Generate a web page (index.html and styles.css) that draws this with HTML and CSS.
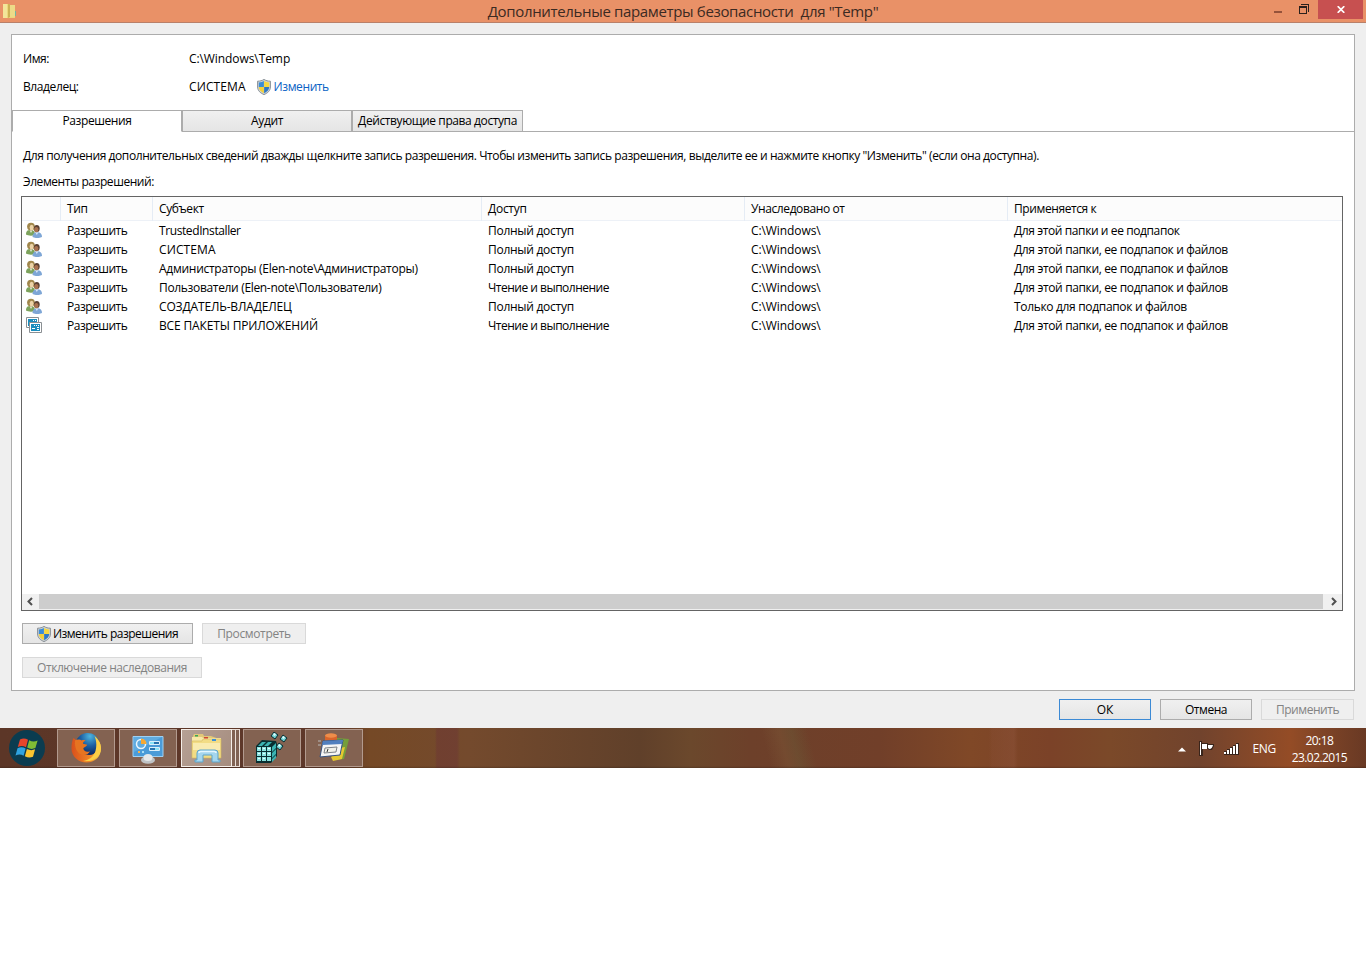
FILE: index.html
```html
<!DOCTYPE html>
<html lang="ru">
<head>
  <meta charset="UTF-8">
  <title>Дополнительные параметры безопасности для "Temp"</title>
  <link rel="stylesheet" href="styles.css">
</head>
<body>

  <svg class="defs" width="0" height="0">
    <symbol id="shield" viewBox="0 0 14 16">
      <path d="M7 .4C5.200 1.600 3 2.200.6 2.200V8c0 3.600 2.600 6 6.400 7.600C10.800 14 13.400 11.600 13.400 8V2.200C11 2.200 8.800 1.600 7 .4z" fill="#cfd5d9" stroke="#7d848b" stroke-width=".9"/>
      <path d="M6.900 2V7.900H1.800V3.400C4 3.300 5.600 2.800 6.900 2z" fill="#3a8cd6"/>
      <path d="M7.100 2V7.900H12.200V3.400C10 3.300 8.400 2.800 7.100 2z" fill="#f6d840"/>
      <path d="M1.800 8.100H6.900V14.300C4 13 1.900 11 1.800 8.100z" fill="#f3d03a"/>
      <path d="M12.200 8.100H7.100V14.300C10 13 12.100 11 12.200 8.100z" fill="#2f78c4"/>
    </symbol>
    <symbol id="users" viewBox="0 -.6 16 16">
      <path d="M0 12c0-3.200 1.200-4.500 4.500-4.500S9 9 9 12.500c-3 1-7 .8-9-.5z" fill="#7da35c"/>
      <path d="M3.500 7.500l1.500 3 1.500-3z" fill="#e9efdf"/>
      <circle cx="5" cy="4" r="3.900" fill="#a1874c"/>
      <ellipse cx="5.600" cy="4.800" rx="2" ry="2.700" fill="#ecd3a8"/>
      <path d="M6.500 14.500c0-3.300 1.500-4.800 4.800-4.800s4.700 1.500 4.700 4.800c-2.500 1.300-7 1.300-9.500 0z" fill="#7ea6d6"/>
      <path d="M9.500 9.800l1.300 2.500 1.400-2.500z" fill="#dbe8f6"/>
      <ellipse cx="10.800" cy="5.800" rx="2.900" ry="3.500" fill="#5a4032"/>
      <ellipse cx="10.300" cy="7" rx="2.100" ry="2.700" fill="#a8714f"/>
    </symbol>
    <symbol id="packages" viewBox="0 0 16 16">
      <path d="M.5.5h12v10H.5z" fill="#fff" stroke="#8a8f93"/>
      <path d="M2 2h9v7H2z" fill="#1a8dbd"/>
      <path d="M7 3h1v1H7zM9 3h1v1H9z" fill="#fff"/>
      <path d="M3.500 5.500h12v10h-12z" fill="#fff" stroke="#8a8f93"/>
      <path d="M5 7h9v7H5z" fill="#1a8dbd"/>
      <path d="M6 11h3v1H6zM8 8h1v1H8zM10 8h1v1h-1zM12 8h1v1h-1zM11 10h2v1h-2zM11 12h2v1h-2z" fill="#fff"/>
    </symbol>
  </svg>

  <div class="titlebar">
    <svg class="folder" width="14" height="16" viewBox="0 0 14 16">
      <path d="M0 1h6l1 1h5v13H0z" fill="#ecd77c"/>
      <path d="M0 1h4v14H0z" fill="#f3e59a"/>
      <path d="M5 1h2v13l-2 1z" fill="#cdb256"/>
      <path d="M7 2h5v12H7z" fill="#eddb88"/>
      <path d="M12 8h1v5h-1z" fill="#71b7a0"/>
    </svg>
    <div class="title">Дополнительные параметры безопасности&nbsp; для "Temp"</div>
    <div class="controls">
      <svg class="min" width="8" height="2"><path d="M0 0h8v2H0z" fill="#95523a"/></svg>
      <svg class="max" width="10" height="10" viewBox="0 0 10 10">
        <path d="M0 2h8v8H0zM1 4v5h6V4z" fill="#2b211d" fill-rule="evenodd"/>
        <path d="M2 0h8v8H9V1H2z" fill="#2b211d"/>
      </svg>
      <div class="close">
        <svg width="8" height="7" viewBox="0 0 8 7"><path d="M.7.200L7.300 6.800M7.300.200L.7 6.800" stroke="#fff" stroke-width="1.700"/></svg>
      </div>
    </div>
  </div>

  <div class="dialog">
    <div class="panel">
      <div class="info">
        <span>Имя:</span><span class="path">C:\Windows\Temp</span>
        <span>Владелец:</span>
        <span class="owner"><span class="system">СИСТЕМА</span><svg width="14" height="16"><use href="#shield"/></svg><a>Изменить</a></span>
      </div>

      <div class="tabs">
        <div class="tab active">Разрешения</div>
        <div class="tab">Аудит</div>
        <div class="tab wide">Действующие права доступа</div>
      </div>

      <p class="hint">Для получения дополнительных сведений дважды щелкните запись разрешения. Чтобы изменить запись разрешения, выделите ее и нажмите кнопку "Изменить" (если она доступна).</p>
      <p class="label">Элементы разрешений:</p>

      <div class="list">
        <div class="row head"><span></span><span>Тип</span><span>Субъект</span><span class="full">Доступ</span><span>Унаследовано от</span><span>Применяется к</span></div>
        <div class="rows">
          <div class="row"><svg><use href="#users"/></svg><span class="type">Разрешить</span><span>TrustedInstaller</span><span class="full">Полный доступ</span><span class="path">C:\Windows\</span><span>Для этой папки и ее подпапок</span></div>
          <div class="row"><svg><use href="#users"/></svg><span class="type">Разрешить</span><span class="system">СИСТЕМА</span><span class="full">Полный доступ</span><span class="path">C:\Windows\</span><span class="scope">Для этой папки, ее подпапок и файлов</span></div>
          <div class="row"><svg><use href="#users"/></svg><span class="type">Разрешить</span><span class="full">Администраторы (Elen-note\Администраторы)</span><span class="full">Полный доступ</span><span class="path">C:\Windows\</span><span class="scope">Для этой папки, ее подпапок и файлов</span></div>
          <div class="row"><svg><use href="#users"/></svg><span class="type">Разрешить</span><span class="group">Пользователи (Elen-note\Пользователи)</span><span class="type">Чтение и выполнение</span><span class="path">C:\Windows\</span><span class="scope">Для этой папки, ее подпапок и файлов</span></div>
          <div class="row"><svg><use href="#users"/></svg><span class="type">Разрешить</span><span class="caps">СОЗДАТЕЛЬ-ВЛАДЕЛЕЦ</span><span class="full">Полный доступ</span><span class="path">C:\Windows\</span><span class="group">Только для подпапок и файлов</span></div>
          <div class="row"><svg><use href="#packages"/></svg><span class="type">Разрешить</span><span class="caps">ВСЕ ПАКЕТЫ ПРИЛОЖЕНИЙ</span><span class="type">Чтение и выполнение</span><span class="path">C:\Windows\</span><span class="scope">Для этой папки, ее подпапок и файлов</span></div>
        </div>
        <div class="scroll">
          <svg width="17" height="15"><path d="M10 4L6.500 7.500l3.500 3.500" fill="none" stroke="#505050" stroke-width="2"/></svg>
          <div class="thumb"></div>
          <svg width="19" height="15"><path d="M9 4l3.500 3.500L9 11" fill="none" stroke="#505050" stroke-width="2"/></svg>
        </div>
      </div>

      <div class="actions">
        <button class="edit"><svg width="14" height="16"><use href="#shield"/></svg>Изменить разрешения</button>
        <button class="view" disabled>Просмотреть</button>
      </div>
      <button class="inherit" disabled>Отключение наследования</button>
    </div>

    <div class="footer">
      <button class="ok">ОК</button>
      <button>Отмена</button>
      <button class="apply" disabled>Применить</button>
    </div>
  </div>

  <div class="taskbar">
    <div class="start">
      <svg width="36" height="36" viewBox="0 0 36 36">
        <circle cx="18" cy="18" r="18" fill="#0b3c50"/>
        <path d="M11 9.500c3-1.500 5.500-1.200 8 .3l-2 7.400c-2.700-1.400-5-1.500-8.200-.2z" fill="#e8452c"/>
        <path d="M20.200 10.300c2.800 1.500 5.500 1.500 8.400.3l-2.200 7.500c-3 1.200-5.400 1-8.200-.5z" fill="#80bd35"/>
        <path d="M8.500 18.200c3-1.400 5.500-1.200 8.100.2l-2 7.300c-2.600-1.400-5-1.500-8.100-.3z" fill="#30a3e0"/>
        <path d="M17.900 19c2.800 1.400 5.300 1.500 8.200.3L24 26.700c-2.900 1.100-5.300.9-8.100-.5z" fill="#fbc530"/>
      </svg>
    </div>
    <div class="task">
      <svg width="32" height="32" viewBox="0 0 32 32">
        <defs>
          <linearGradient id="fox" x1="0" y1="0" x2="1" y2="0">
            <stop offset="0" stop-color="#d9501c"/><stop offset=".6" stop-color="#ee8225"/><stop offset="1" stop-color="#fbd04a"/>
          </linearGradient>
          <radialGradient id="globe" cx=".6" cy=".15" r=".8">
            <stop offset="0" stop-color="#4db4df"/><stop offset=".55" stop-color="#1c5fa3"/><stop offset="1" stop-color="#0d2d66"/>
          </radialGradient>
        </defs>
        <path d="M3.500 6l3 2.500L12 4h11c5 2.500 8 7 8 12.500C31 25 24.500 30.500 16.500 30.500S1.500 24.500 1.500 16.500C1.500 12.500 2 9 3.500 6z" fill="url(#fox)"/>
        <path d="M7 7C10 2.500 14 1 18 1c5 0 9 3 10.500 7 .5 7-2 15-9 15-6 0-10-3-10.500-8z" fill="url(#globe)"/>
        <path d="M5 8.500c3-1.500 5.500-.8 6.500 0 1.500-.6 2.800-.5 4 0-1.800.9-2.600 2-2.500 3.200l4.300 1c-.5 1.700-3.300 2.200-4 3.500.5 2.800 3 4.500 6.700 3-1.500 3-5 4.500-8.500 3.200C7 21 4.500 16 5 8.500z" fill="#e67421"/>
        <path d="M24.500 4c7 5 8.500 15 3 21-3.500 3.500-9 5-14.500 4 6.500-1 11-4.500 12.500-10 1.200-5 1.200-10-1-15z" fill="#fbcf45"/>
      </svg>
    </div>
    <div class="task">
      <svg width="32" height="32" viewBox="0 0 32 32">
        <path d="M1 4.500h30v20H1z" fill="#4a9bd8" stroke="#9fd1f2"/>
        <path d="M2 5h28L2 20z" fill="#5fabdf"/>
        <circle cx="9" cy="12" r="4.500" fill="none" stroke="#e8f5fc" stroke-width="1.500"/>
        <path d="M9 12V6.500a5.500 5.500 0 0 1 5.500 5.500z" fill="#f6a833"/>
        <path d="M17.500 9.500h10v3h-10zM17.500 15.500h10v3h-10z" fill="#2871ad" stroke="#dbeffa"/>
        <path d="M18 10h4v2h-4zM23 16h4v2h-4z" fill="#8be2f6"/>
        <path d="M6 19h2v2H6z" fill="#f6b04b"/><path d="M10 19h2v2h-2z" fill="#a8ddf5"/>
        <ellipse cx="16" cy="28" rx="7" ry="3.800" fill="#bfc3c6"/>
        <ellipse cx="16" cy="25.500" rx="4.500" ry="3.500" fill="#e6e8e9"/>
      </svg>
    </div>
    <div class="task current">
      <svg width="34" height="32" viewBox="0 0 34 32">
        <path d="M3 4l1-2h9l1 2h7l8 3v19H3z" fill="#e2c878"/>
        <path d="M2 5h10l1 1h18v20H2z" fill="#f8e9a8"/>
        <path d="M2 9h10l1-2h18v19H2z" fill="#f2dc85" stroke="#d4b85d" stroke-width=".6"/>
        <path d="M5 3h3v1.500H5z" fill="#3aa657"/><path d="M14 5h4v1.500h-4z" fill="#cf4932"/><path d="M22 7h4v2h-4z" fill="#3e91d6"/>
        <path d="M3 11h27v7H3z" fill="#f9ebb0"/>
        <path d="M7 28V21q0-3 3-3h15q3 0 3 3v7h2v2h-8v-7H13v7H5v-2z" fill="#a5d6ee" stroke="#5da5cb"/>
        <path d="M9 21q0-1.500 2-1.500h13q2 0 2 1.500" fill="none" stroke="#e5f7ff" stroke-width="1.500"/>
      </svg>
    </div>
    <div class="stack"></div><div class="stack"></div>
    <div class="task after">
      <svg width="32" height="32" viewBox="0 0 32 32">
        <path d="M0 14l6-6 14 1 1 3v12l-6 7H0z" fill="#092e31"/>
        <path d="M1 15h4v4H1zM6 15h4v4H6zM11 15h4v4h-4zM1 20h4v4H1zM6 20h4v4H6zM11 20h4v4h-4zM1 25h4v4H1zM6 25h4v4H6zM11 25h4v4h-4z" fill="#8be3df"/>
        <path d="M2 14l4-4h4l-4 4zM8 14l4-4h4l-4 4zM16 15l4-4v5l-4 4zM16 21l4-4v5l-4 4zM16 27l4-4v3l-4 4z" fill="#3bb3b2"/>
        <path d="M2 16h2v1H2zM7 16h2v1H7zM12 16h2v1h-2zM2 21h2v1H2zM7 21h2v1H7zM12 21h2v1h-2zM2 26h2v1H2zM7 26h2v1H7z" fill="#e3ffff"/>
        <path d="M18 0l4 3-3 4-4-3zM27 3l4 3-3 4-4-3zM23 11l4 3-3 4-4-3z" fill="#6fd0d1" stroke="#082c30"/>
        <path d="M17 2l2-1 1 2-2 1zM26 5l2-1 1 2-2 1zM22 13l2-1 1 2-2 1z" fill="#dcffff"/>
      </svg>
    </div>
    <div class="task">
      <svg width="34" height="32" viewBox="0 0 34 32">
        <path d="M20 6l12 1-5 20-9 1z" fill="#759e3b"/>
        <path d="M23 16l5-1-3 12-9 2-2-4z" fill="#e5c831"/>
        <path d="M8 3.500h12V11H8z" fill="#d9652b"/>
        <ellipse cx="14" cy="3.500" rx="6" ry="2.200" fill="#ee8d4a"/>
        <path d="M6 9l20-1-3 15-20 2z" fill="#f5f5f5" stroke="#34517f"/>
        <path d="M6 9l20-1-1 4-20 1z" fill="#517fbe"/>
        <path d="M8 16l12-1-1 5-12 1z" fill="#f1f1ea" stroke="#7d8288"/>
        <path d="M11 17l-1 3" stroke="#333"/>
        <path d="M1 9h3M1 13h3" stroke="#bbb"/>
      </svg>
    </div>
    <div class="tray">
      <svg class="up" width="8" height="5"><path d="M0 4.500L4 .5l4 4z" fill="#fff"/></svg>
      <svg class="flag" width="16" height="16" viewBox="0 0 16 16">
        <path d="M0 0h3v2h6v1h6v2l-2 4h-3l-1-1H4v7H0z" fill="#3a251b"/>
        <path d="M1 1h1v13H1zM3 3h5v5H3zM9 4h5q-1 4-3.500 4L9 7z" fill="#fff"/>
      </svg>
      <svg class="net" width="15" height="12" viewBox="0 0 15 12">
        <path d="M0 8h3V6h3V4h3V2h3V0h3v12H0z" fill="#38241b"/>
        <path d="M0 9h2v2H0zM3 7h2v4H3zM6 5h2v6H6zM9 3h2v8H9zM12 1h2v10h-2z" fill="#fff"/>
      </svg>
      <span class="lang">ENG</span>
      <div class="clock"><span>20:18</span><span>23.02.2015</span></div>
    </div>
  </div>

</body>
</html>
```
FILE: styles.css
```css
* { margin: 0; padding: 0; box-sizing: border-box; }
body {
  font: 12px/16px "Open Sans", "Noto Sans", sans-serif;
  letter-spacing: -.4px;
  background: #fff;
  color: #000;
  white-space: nowrap;
}
svg { display: block; flex: none; }
.defs { display: none; }

.titlebar {
  display: grid;
  grid-template-columns: 120px 1fr 120px;
  height: 23px;
  background: #e99167;
  border-bottom: 1px solid #b98069;
}
.folder { margin: 3px 0 0 3px; }
.title {
  font-size: 15px;
  line-height: 23px;
  letter-spacing: -.34px;
  text-align: center;
  color: #3b2a22;
}
.controls { display: flex; }
.min { margin: 11px 17px 0 28px; }
.max { margin: 4px 9px 0 0; }
.close {
  width: 45px;
  height: 19px;
  margin-left: auto;
  margin-right: 3px;
  background: #c75050;
  display: flex;
  align-items: center;
  justify-content: center;
}

.dialog {
  height: 705px;
  padding: 11px 11px 0;
  background: #efefef;
}
.panel {
  height: 657px;
  border: 1px solid #acacac;
  background: #fff;
}
.info {
  display: grid;
  grid-template-columns: 166px 1fr;
  align-content: start;
  row-gap: 12px;
  padding: 16px 11px 0;
  height: 75px;
}
.owner { display: flex; }
.owner svg { margin: 0 3px 0 11px; }
.owner a { color: #0a62c4; }
.system { letter-spacing: .1px; }
.path { letter-spacing: -.08px; }
.caps { letter-spacing: -.15px; }
.full { letter-spacing: -.27px; }
.group { letter-spacing: -.33px; }
.scope { letter-spacing: -.36px; }
.type { letter-spacing: -.5px; }

.tabs {
  display: flex;
  height: 22px;
  border-bottom: 1px solid #acacac;
}
.tab {
  width: 170px;
  height: 22px;
  line-height: 20px;
  text-align: center;
  border: 1px solid #acacac;
  background: linear-gradient(#f0f0f0, #e5e5e5);
}
.tab.active { background: #fff; border-bottom-color: #fff; }
.tab.wide { width: 171px; }

.hint { margin: 16px 0 0 11px; letter-spacing: -.415px; }
.label { margin: 10px 0 6px 11px; letter-spacing: -.43px; }

.list {
  width: 1322px;
  height: 415px;
  margin-left: 9px;
  border: 1px solid #646464;
  display: flex;
  flex-direction: column;
}
.row {
  display: grid;
  grid-template-columns: 39px 92px 329px 263px 263px 1fr;
  height: 19px;
  line-height: 19px;
}
.row span { padding-left: 6px; }
.row svg { width: 16px; height: 16px; margin: 1px 0 0 4px; }
.head {
  height: 24px;
  line-height: 24px;
  background: #fcfcfc;
  border-bottom: 1px solid #edf1f7;
}
.head span { border-right: 1px solid #e5ecf5; }
.head span:last-child { border-right: none; }
.rows { flex: 1; }
.scroll {
  display: flex;
  height: 16px;
  background: #f0f0f0;
}
.thumb { flex: 1; height: 15px; background: #cdcdcd; }

button {
  width: 92px;
  height: 21px;
  font: inherit;
  letter-spacing: -.45px;
  color: #000;
  border: 1px solid #acacac;
  background: linear-gradient(#f0f0f0, #e5e5e5);
  display: flex;
  align-items: center;
  justify-content: center;
}
button:disabled {
  color: #838383;
  border-color: #d9d9d9;
  background: #efefef;
}
.actions { display: flex; gap: 9px; margin: 12px 0 0 10px; }
.edit { width: 171px; letter-spacing: -.5px; }
.edit svg { margin-right: 2px; }
.view { width: 104px; letter-spacing: -.35px; }
.inherit { width: 180px; margin: 13px 0 0 10px; }
.footer {
  display: flex;
  justify-content: flex-end;
  gap: 9px;
  padding: 8px 1px 0 0;
}
.ok { border-color: #3c8ad5; letter-spacing: 0; }
.apply { width: 93px; }

.taskbar {
  display: flex;
  height: 40px;
  background:
    linear-gradient(transparent 38px, #0003),
    linear-gradient(75deg, transparent 745px, #81603c55 762px, #6b633b55 774px, transparent 790px),
    linear-gradient(90deg, transparent 435px, #6b303866 437px, #6b303866 457px, transparent 460px),
    linear-gradient(90deg, transparent 989px, #8f553d33 992px, #8f553d66 1014px, transparent 1018px),
    linear-gradient(90deg, #5c3627, #5e382a 340px, #754926 370px, #744a2d 470px, #60402a 640px, #6b482c 690px, #6d402a 750px, #713f29 880px, #804827 970px, #7b4228 1050px, #7b4929 1110px, #71432d 1200px, #944c26 1290px, #804527 1320px, #693924);
}
.start { width: 57px; padding: 2px 0 0 9px; }
.task {
  width: 58px;
  height: 38px;
  margin: 1px 4px 0 0;
  border: 1px solid #b29a8e;
  background: #836251;
  display: flex;
  align-items: center;
  justify-content: center;
}
.task.current {
  width: 51px;
  margin-right: 0;
  border-color: #f5eee8;
  background: linear-gradient(120deg, #b6a195, #a58c7e);
}
.stack {
  width: 4px;
  height: 38px;
  margin-top: 1px;
  border: 1px solid #eadfd8;
  border-left: none;
  background: #806253;
}
.task.after { margin-left: 3px; }
.tray {
  display: flex;
  margin-left: auto;
  color: #fff;
}
.up { margin: 19px 13px 0 0; }
.flag { margin: 13px 9px 0 0; }
.net { margin: 15px 14px 0 0; }
.lang { line-height: 41px; }
.clock {
  display: flex;
  flex-direction: column;
  align-items: center;
  line-height: 17px;
  letter-spacing: -.6px;
  margin: 4px 19px 0 16px;
}
```
